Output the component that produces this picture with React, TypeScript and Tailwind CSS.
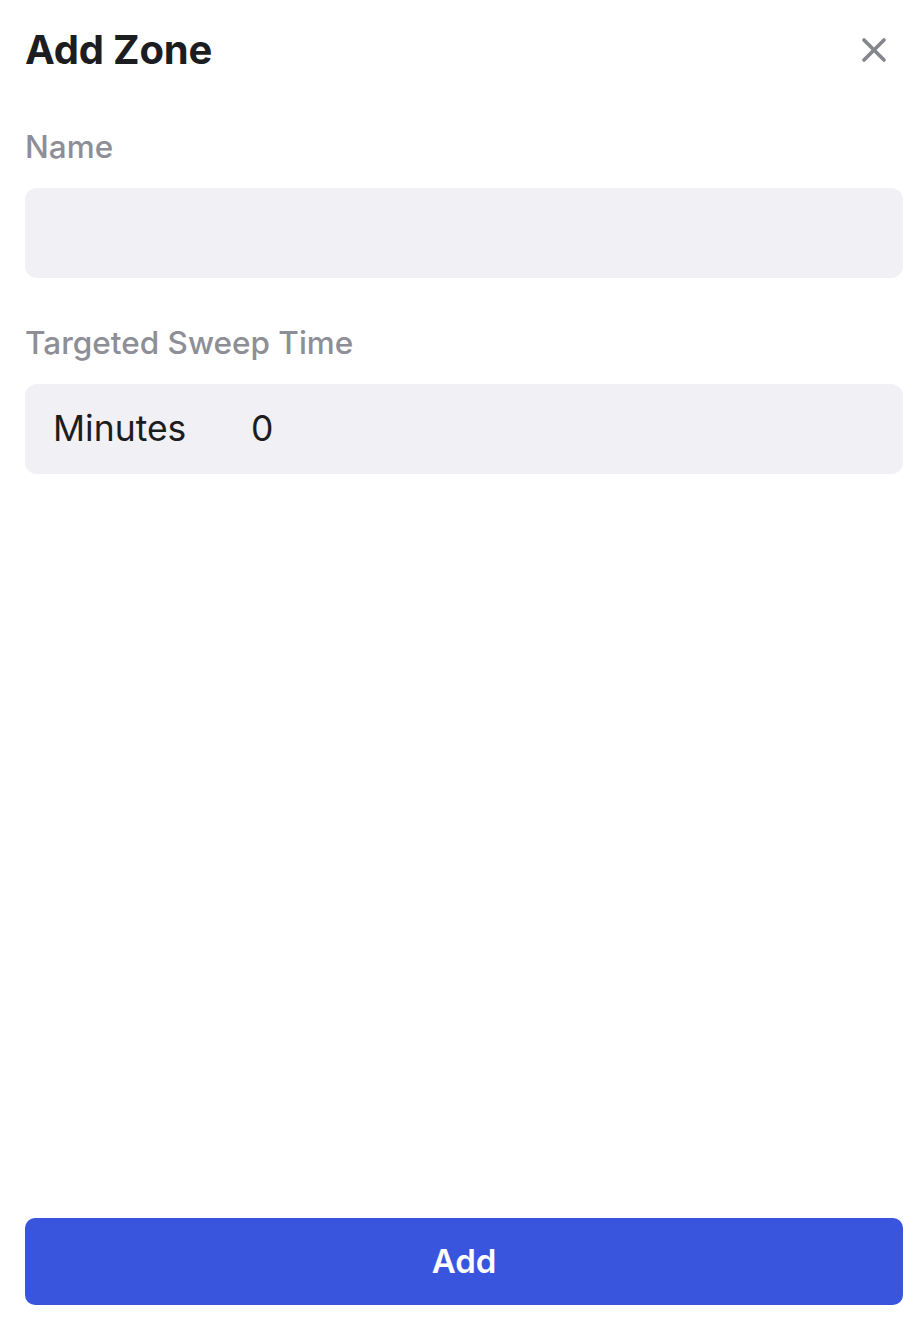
import { X } from "lucide-react";

export default function App() {
  return (
    <div
      className="flex h-[1336px] w-[922px] flex-col bg-white pl-[25px] pr-[19px]"
      style={{ fontFamily: "Inter, 'Noto Sans', sans-serif" }}
    >
      {/* Header */}
      <div className="flex h-[100px] items-center justify-between">
        <h1 className="text-[40px] font-bold tracking-[-0.2px] text-[#1c1d21]">Add Zone</h1>
        <button className="mr-[9px] text-[#85858d]">
          <X className="h-[40px] w-[40px]" strokeWidth={2.2} />
        </button>
      </div>

      {/* Name */}
      <label className="mt-[27px] text-[31.5px] font-medium leading-[40px] text-[#8e8e96]">Name</label>
      <div className="mt-[21px] h-[90px] rounded-[12px] bg-[#f0f0f5]" />

      {/* Sweep time */}
      <label className="mt-[45px] text-[31.5px] font-medium leading-[40px] text-[#8e8e96]">
        Targeted Sweep Time
      </label>
      <div className="mt-[21px] flex h-[90px] items-center rounded-[12px] bg-[#f0f0f5] px-[28px] text-[35.5px] text-[#1c1d21]">
        <span className="w-[198px]">Minutes</span>
        <span>0</span>
      </div>

      <div className="flex-1" />

      <button className="mb-[31px] h-[87px] rounded-[10px] bg-[#3a55dd] text-[33px] font-semibold text-white">
        Add
      </button>
    </div>
  );
}
